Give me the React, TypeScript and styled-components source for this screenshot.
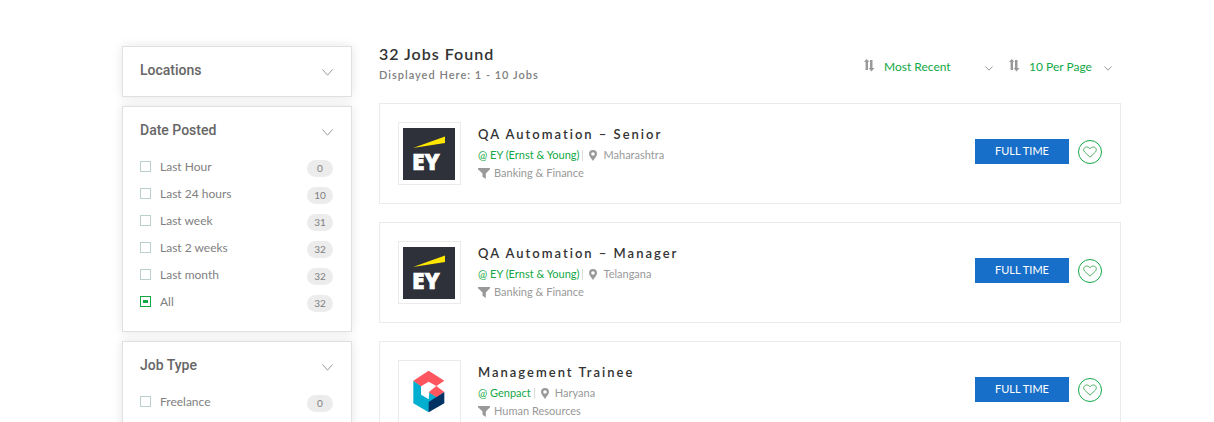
import React from "react";
import styled, { createGlobalStyle } from "styled-components";

const GlobalStyle = createGlobalStyle`
  *, *::before, *::after { box-sizing: border-box; }
  body {
    margin: 0;
    background: #fff;
    color: #808080;
    font-family: Lato, "Liberation Sans", sans-serif;
    font-size: 12px;
    line-height: 18px;
  }
  h1, h2, h3, p, ul { margin: 0; padding: 0; }
  ul { list-style: none; }
`;

const green = "#12a846";

const Page = styled.div`
  display: flex;
  align-items: flex-start;
  gap: 27px;
  height: 100vh;
  overflow: hidden;
  padding: 46px 93px 0 122px;
`;

const Sidebar = styled.aside`
  display: flex;
  flex: 0 0 230px;
  flex-direction: column;
  gap: 9px;
`;

const FilterCard = styled.section`
  padding: 13px 18px 16px 17px;
  border: 1px solid #e0e0e0;
  background: #fff;
  box-shadow: 0 0 10px rgba(0, 0, 0, 0.1);
`;

const FilterToggle = styled.button`
  display: flex;
  align-items: center;
  justify-content: space-between;
  width: 100%;
  padding: 0;
  border: 0;
  background: none;
  color: #666;
  font: 500 14px/20px Roboto, sans-serif;
  text-align: left;

  svg {
    margin-top: 4px;
  }
`;

const OptionList = styled.ul`
  padding: 13px 0 0;
`;

const Option = styled.li`
  display: flex;
  align-items: center;
  justify-content: space-between;
  height: 27px;
`;

const OptionLabel = styled.label`
  display: flex;
  align-items: center;
  gap: 9px;
`;

const Tick = styled.input`
  appearance: none;
  display: grid;
  place-items: center;
  width: 11px;
  height: 11px;
  margin: 0;
  border: 1px solid #bccfcf;
  background: #fff;

  &:checked {
    border-color: ${green};
  }

  &:checked::before {
    content: "";
    width: 5px;
    height: 3px;
    background: ${green};
  }
`;

const Count = styled.span`
  min-width: 26px;
  margin-top: 4px;
  border-radius: 9px;
  background: #ececec;
  font-size: 10px;
  line-height: 17px;
  text-align: center;
`;

const Results = styled.main`
  flex: 1;
  min-width: 0;
`;

const ResultsHeader = styled.header`
  display: flex;
  justify-content: space-between;
  height: 57px;
`;

const ResultsTitle = styled.h1`
  color: #333;
  font-size: 16px;
  font-weight: 600;
  letter-spacing: 1px;
  line-height: 16px;
`;

const ResultsRange = styled.p`
  padding-top: 4px;
  font-size: 11px;
  font-weight: 600;
  letter-spacing: 1px;
`;

const SortBar = styled.div`
  display: flex;
  gap: 16px;
  padding: 10px 9px 0 0;
`;

const SortField = styled.label<{ $width: number }>`
  display: grid;
  grid-template-columns: 20px 1fr 8px;
  align-items: center;
  width: ${(p) => p.$width}px;
  height: 22px;
`;

const SortSelect = styled.select`
  appearance: none;
  grid-row: 1;
  grid-column: 2 / 4;
  width: 100%;
  padding: 0;
  border: 0;
  background: none;
  color: ${green};
  font: 400 12px/20px Lato, sans-serif;
`;

const SelectArrow = styled.span`
  display: flex;
  grid-row: 1;
  grid-column: 3;
  padding-top: 2px;
  pointer-events: none;
`;

const JobList = styled.ul`
  display: grid;
  gap: 18px;
`;

const JobCard = styled.li`
  display: flex;
  align-items: flex-start;
  padding: 18px;
  border: 1px solid #ebebeb;
`;

const LogoFrame = styled.div`
  flex: none;
  width: 63px;
  height: 63px;
  padding: 5px 4px;
  border: 1px solid #ebebeb;
`;

const JobBody = styled.div`
  flex: 1;
  min-width: 0;
  padding: 3px 0 0 17px;
  color: #999;
  font-size: 11px;
`;

const JobTitle = styled.h2`
  padding-bottom: 2px;
  color: #333;
  font-size: 13px;
  font-weight: 600;
  letter-spacing: 2px;
  line-height: 19px;
`;

const MetaRow = styled.div`
  display: flex;
  align-items: center;
  height: 18px;
`;

const Company = styled.a`
  padding-right: 3px;
  color: ${green};
  text-decoration: none;
`;

const Place = styled.span`
  display: flex;
  align-items: center;
  gap: 6px;
  padding-left: 6px;
  border-left: 1px solid #ddd;
  line-height: 10px;
`;

const Sector = styled.span`
  display: flex;
  align-items: center;
  gap: 4px;
`;

const Actions = styled.div`
  display: flex;
  align-items: center;
  gap: 9px;
  padding-top: 17px;
`;

const TypeButton = styled.button`
  width: 94px;
  height: 25px;
  padding: 0 0 2px;
  border: 0;
  background: #186fc9;
  color: #fff;
  font: 400 11px/23px Lato, sans-serif;
`;

const SaveButton = styled.button`
  display: grid;
  place-items: center;
  width: 24px;
  height: 24px;
  margin-top: 1px;
  padding: 0;
  border: 1px solid ${green};
  border-radius: 50%;
  background: #fff;
`;

const Chevron = ({ width, height }: { width: number; height: number }) => (
  <svg width={width} height={height} viewBox={`0 0 ${width} ${height}`} fill="none" stroke="#999" aria-hidden="true">
    <path d={`M.5 .5 L${width / 2} ${height - 0.8} L${width - 0.5} .5`} />
  </svg>
);

const SortGlyph = styled.svg`
  margin-bottom: 3px;
`;

const SortIcon = () => (
  <SortGlyph width="11" height="13" viewBox="0 0 11 13" fill="#999" aria-hidden="true">
    <path d="M2.700 0 5.400 3H4V11H1.600V3H0ZM6 1H8.500V9H10.500L7.500 12.500 4.600 9H6Z" />
  </SortGlyph>
);

const PinIcon = () => (
  <svg width="8" height="11" viewBox="0 0 8 11" fill="#999" aria-hidden="true">
    <path fillRule="evenodd" d="M4 0a4 4 0 0 1 4 4c0 2.3-2.7 4.4-4 7C2.700 8.400 0 6.300 0 4a4 4 0 0 1 4-4Zm0 2.200a1.800 1.800 0 1 0 0 3.600 1.800 1.800 0 0 0 0-3.600Z" />
  </svg>
);

const FilterIcon = () => (
  <svg width="12" height="11" viewBox="0 0 12 11" fill="#999" aria-hidden="true">
    <path d="M0 0h12v1.300L7.800 5.500V11L4.500 8.800V5.500L0 1.300Z" />
  </svg>
);

const HeartIcon = () => (
  <svg width="14" height="12" viewBox="0 0 14 12" fill="none" stroke="#4fae62" aria-hidden="true">
    <path d="M7 11.200 1.500 6C-.3 3.400 1.200 1 3.700 1 5.300 1 6.500 1.900 7 2.900 7.500 1.900 8.700 1 10.300 1 12.800 1 14.300 3.400 12.500 6Z" />
  </svg>
);

const Logo = styled.svg`
  display: block;
  width: 52px;
  height: 52px;
`;

const EyLogo = () => (
  <Logo viewBox="0 0 52 52" role="img" aria-label="EY">
    <rect width="52" height="52" fill="#2e303a" />
    <path d="M10 20 42 8.500V15Z" fill="#ffe600" />
    <text x="9" y="42" fill="#fff" stroke="#fff" strokeWidth=".6" fontFamily="Open Sans, sans-serif" fontWeight="800" fontSize="23">EY</text>
  </Logo>
);

const GenpactLogo = () => (
  <Logo viewBox="24 33 156 156" role="img" aria-label="Genpact">
    <path d="M55 77 78 92V120L101 134V172L55 145Z" fill="#00aecf" />
    <path d="M78 119 101 133 103 112 126 126 101 172Z" fill="#00aecf" />
    <path d="M101 47 148 77 124 93 101 80 78 94 55 77Z" fill="#ff555f" />
    <path d="M124 93 148 111 125 127 101 112Z" fill="#ff555f" />
    <path d="M148 111V145L101 172V141Z" fill="#003263" />
  </Logo>
);

interface FilterOption {
  label: string;
  count: number;
  checked?: boolean;
}

const filters: { title: string; options: FilterOption[] }[] = [
  { title: "Locations", options: [] },
  {
    title: "Date Posted",
    options: [
      { label: "Last Hour", count: 0 },
      { label: "Last 24 hours", count: 10 },
      { label: "Last week", count: 31 },
      { label: "Last 2 weeks", count: 32 },
      { label: "Last month", count: 32 },
      { label: "All", count: 32, checked: true },
    ],
  },
  { title: "Job Type", options: [{ label: "Freelance", count: 0 }] },
];

const jobs = [
  { title: "QA Automation – Senior", company: "EY (Ernst & Young)", place: "Maharashtra", sector: "Banking & Finance", Brand: EyLogo },
  { title: "QA Automation – Manager", company: "EY (Ernst & Young)", place: "Telangana", sector: "Banking & Finance", Brand: EyLogo },
  { title: "Management Trainee", company: "Genpact", place: "Haryana", sector: "Human Resources", Brand: GenpactLogo },
];

const Sort = ({ name, value, width }: { name: string; value: string; width: number }) => (
  <SortField $width={width}>
    <SortIcon />
    <SortSelect aria-label={name} defaultValue={value}>
      <option>{value}</option>
    </SortSelect>
    <SelectArrow>
      <Chevron width={8} height={5} />
    </SelectArrow>
  </SortField>
);

export default function App() {
  return (
    <>
      <GlobalStyle />
      <Page>
        <Sidebar>
          {filters.map(({ title, options }) => (
            <FilterCard key={title}>
              <FilterToggle type="button">
                {title}
                <Chevron width={11} height={7} />
              </FilterToggle>
              {options.length > 0 && (
                <OptionList>
                  {options.map(({ label, count, checked }) => (
                    <Option key={label}>
                      <OptionLabel>
                        <Tick type="checkbox" defaultChecked={checked} />
                        {label}
                      </OptionLabel>
                      <Count>{count}</Count>
                    </Option>
                  ))}
                </OptionList>
              )}
            </FilterCard>
          ))}
        </Sidebar>
        <Results>
          <ResultsHeader>
            <div>
              <ResultsTitle>32 Jobs Found</ResultsTitle>
              <ResultsRange>Displayed Here: 1 - 10 Jobs</ResultsRange>
            </div>
            <SortBar>
              <Sort name="Sort by" value="Most Recent" width={129} />
              <Sort name="Jobs per page" value="10 Per Page" width={103} />
            </SortBar>
          </ResultsHeader>
          <JobList>
            {jobs.map(({ title, company, place, sector, Brand }) => (
              <JobCard key={title}>
                <LogoFrame>
                  <Brand />
                </LogoFrame>
                <JobBody>
                  <JobTitle>{title}</JobTitle>
                  <MetaRow>
                    <Company href="#">@ {company}</Company>
                    <Place>
                      <PinIcon />
                      {place}
                    </Place>
                  </MetaRow>
                  <MetaRow>
                    <Sector>
                      <FilterIcon />
                      {sector}
                    </Sector>
                  </MetaRow>
                </JobBody>
                <Actions>
                  <TypeButton type="button">FULL TIME</TypeButton>
                  <SaveButton type="button" aria-label="Save job">
                    <HeartIcon />
                  </SaveButton>
                </Actions>
              </JobCard>
            ))}
          </JobList>
        </Results>
      </Page>
    </>
  );
}
